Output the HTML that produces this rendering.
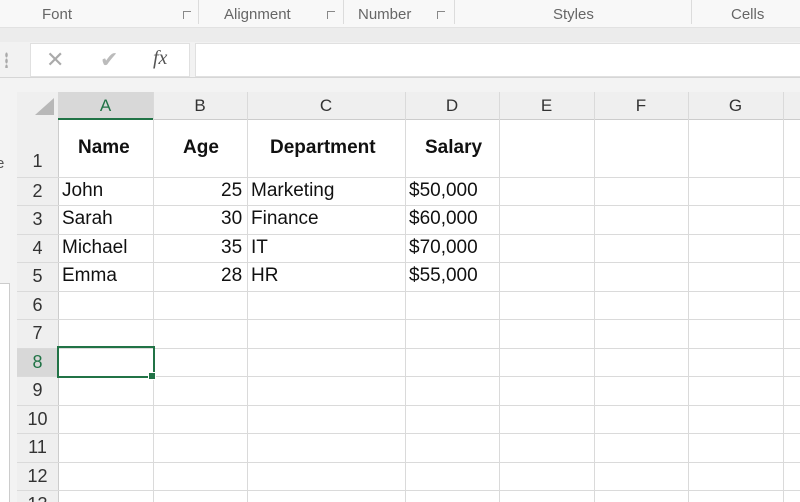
<!DOCTYPE html><html style="overflow:hidden;height:502px"><head><style>
body{margin:0;width:800px;height:502px;overflow:hidden;background:#f3f3f3;font-family:"Liberation Sans",sans-serif;position:relative}
.a{position:absolute}
.rib{left:0;top:0;width:800px;height:27px;background:#f8f8f8;border-bottom:1px solid #e2e2e2}
.rl{top:6px;font-size:15px;color:#666}
.sep{top:0;width:1px;height:24px;background:#dcdcdc}
.lau{top:11px;width:7px;height:7px;border-left:1px solid #888;border-top:1px solid #888}
.cell{font-size:19px;color:#111}
.ch{font-size:17px;color:#333;text-align:center;top:96px}
.rh{font-size:18px;color:#333;width:41px;text-align:center;left:17px}
.vl{width:1px;background:#dadada}
.hl{height:1px;background:#dadada}
b{font-weight:bold}
#wrap{left:0;top:0;width:800px;height:502px;overflow:hidden}
</style></head><body>
<div class="a rib"></div>
<div class="a rl" style="left:42px">Font</div>
<div class="a lau" style="left:183px"></div>
<div class="a sep" style="left:198px"></div>
<div class="a rl" style="left:224px">Alignment</div>
<div class="a lau" style="left:327px"></div>
<div class="a sep" style="left:343px"></div>
<div class="a rl" style="left:358px">Number</div>
<div class="a lau" style="left:437px"></div>
<div class="a sep" style="left:454px"></div>
<div class="a rl" style="left:553px">Styles</div>
<div class="a sep" style="left:691px"></div>
<div class="a rl" style="left:731px">Cells</div>
<div class="a" style="left:0;top:28px;width:800px;height:14px;background:#ececec"></div>
<div class="a" style="left:0;top:42px;width:800px;height:35px;background:#f2f2f2;border-bottom:1px solid #d6d6d6"></div>
<div class="a" style="left:5px;top:52px;width:3px;height:16px;background:radial-gradient(#aaa 1px,transparent 1.5px) 0 0/3px 6px"></div>
<div class="a" style="left:30px;top:43px;width:158px;height:32px;background:#fff;border:1px solid #e0e0e0"></div>
<div class="a" style="left:46px;top:47px;font-size:22px;color:#aaa">✕</div>
<div class="a" style="left:100px;top:47px;font-size:22px;color:#bbb">✔</div>
<div class="a" style="left:153px;top:47px;font-size:20px;color:#555;font-family:'Liberation Serif',serif;font-style:italic">fx</div>
<div class="a" style="left:195px;top:43px;width:605px;height:32px;background:#fff;border:1px solid #e0e0e0;border-right:none"></div>
<div class="a" style="left:0;top:155px;font-size:15px;color:#555;margin-left:-4px">e</div>
<div class="a" style="left:0;top:283px;width:9px;height:219px;background:#fff;border:1px solid #ccc;border-left:none"></div>
<div class="a" id="wrap">
<div class="a" style="left:17px;top:92px;width:783px;height:410px;background:#fff"></div>
<div class="a" style="left:17px;top:92px;width:783px;height:27px;background:#efefef;border-bottom:1px solid #ccc"></div>
<div class="a" style="left:17px;top:92px;width:41px;height:410px;background:#efefef;border-right:1px solid #ccc"></div>
<div class="a" style="left:58px;top:92px;width:95px;height:26px;background:#d8d8d8;border-bottom:2px solid #217346"></div>
<div class="a" style="left:17px;top:348px;width:41px;height:28px;background:#d8d8d8"></div>
<svg class="a" style="left:35px;top:98px" width="19" height="17"><polygon points="19,0 19,17 0,17" fill="#b8b8b8"/></svg>
<div id="g"></div>
<div class="a ch" style="left:58px;width:95px;color:#217346">A</div>
<div class="a ch" style="left:153px;width:94px">B</div>
<div class="a ch" style="left:247px;width:158px">C</div>
<div class="a ch" style="left:405px;width:94px">D</div>
<div class="a ch" style="left:499px;width:95px">E</div>
<div class="a ch" style="left:594px;width:94px">F</div>
<div class="a ch" style="left:688px;width:95px">G</div>
<div class="a cell" style="left:78px;top:137px"><b>Name</b></div>
<div class="a cell" style="left:183px;top:137px"><b>Age</b></div>
<div class="a cell" style="left:270px;top:137px"><b>Department</b></div>
<div class="a cell" style="left:425px;top:137px"><b>Salary</b></div>
<div class="a cell" style="left:62px;top:180px">John</div><div class="a cell" style="left:221px;top:180px">25</div><div class="a cell" style="left:251px;top:180px">Marketing</div><div class="a cell" style="left:409px;top:180px">$50,000</div>
<div class="a cell" style="left:62px;top:208px">Sarah</div><div class="a cell" style="left:221px;top:208px">30</div><div class="a cell" style="left:251px;top:208px">Finance</div><div class="a cell" style="left:409px;top:208px">$60,000</div>
<div class="a cell" style="left:62px;top:237px">Michael</div><div class="a cell" style="left:221px;top:237px">35</div><div class="a cell" style="left:251px;top:237px">IT</div><div class="a cell" style="left:409px;top:237px">$70,000</div>
<div class="a cell" style="left:62px;top:265px">Emma</div><div class="a cell" style="left:221px;top:265px">28</div><div class="a cell" style="left:251px;top:265px">HR</div><div class="a cell" style="left:409px;top:265px">$55,000</div>
<div class="a" style="left:57px;top:346px;width:94px;height:28px;border:2px solid #217346"></div>
<div class="a" style="left:148px;top:372px;width:6px;height:6px;background:#217346;border:1px solid #fff"></div>
</div>
<script>
var g=document.getElementById('g'),h='';
var cols=[153,247,405,499,594,688,783];
cols.forEach(function(x){h+='<div class="a vl" style="left:'+x+'px;top:92px;height:410px"></div>'});
var rows=[119,177,205,234,262,291,319,348,376,405,433,462,490];
for(var i=1;i<rows.length;i++){h+='<div class="a hl" style="left:17px;top:'+rows[i]+'px;width:783px"></div>';}
for(var i=0;i<rows.length;i++){var t=(i==0?151:rows[i]+4);var c=(i==7?'#217346':'#333');h+='<div class="a rh" style="top:'+t+'px;color:'+c+'">'+(i+1)+'</div>';}
g.innerHTML=h;
</script>
</body></html>
